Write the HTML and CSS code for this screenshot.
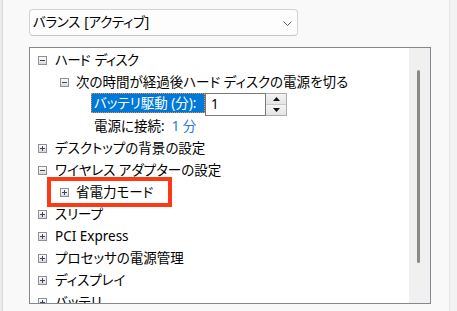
FILE: index.html
```html
<!DOCTYPE html>
<html lang="ja">
<head>
<meta charset="utf-8">
<link rel="stylesheet" href="styles.css">
</head>
<body>
<div class="page">
  <div class="edge-left"></div>
  <div class="main">
    <div class="combo">
      <span class="combo-text">バランス [アクティブ]</span>
      <svg class="chev" width="9" height="5" viewBox="0 0 9 5"><path d="M0.5 0.5 L4.5 4.5 L8.5 0.5" fill="none" stroke="#5a5a5a" stroke-width="1"/></svg>
    </div>
    <div class="tree">
      <div class="tree-list">
        <div class="row l0"><span class="exp"><svg width="7" height="7" viewBox="0 0 7 7"><path d="M1 3.5h5" stroke="#34466b"/></svg></span><span class="kana">ハード ディスク</span></div>
        <div class="row l1"><span class="exp"><svg width="7" height="7" viewBox="0 0 7 7"><path d="M1 3.5h5" stroke="#34466b"/></svg></span><span>次の時間が経過後ハード ディスクの電源を切る</span></div>
        <div class="row l2 edit-row">
          <span class="sel">バッテリ駆動 (分):</span>
          <span class="edit">1</span>
          <span class="spin">
            <span class="spin-btn"><svg width="7" height="4" viewBox="0 0 7 4"><path d="M0 4 L3.5 0 L7 4Z" fill="#111"/></svg></span>
            <span class="spin-btn"><svg width="7" height="4" viewBox="0 0 7 4"><path d="M0 0 L3.5 4 L7 0Z" fill="#111"/></svg></span>
          </span>
        </div>
        <div class="row l2t"><span>電源に接続:</span><span class="val">1 分</span></div>
        <div class="row l0"><span class="exp"><svg width="7" height="7" viewBox="0 0 7 7"><path d="M1 3.5h5M3.5 1v5" stroke="#34466b"/></svg></span><span>デスクトップの背景の設定</span></div>
        <div class="row l0"><span class="exp"><svg width="7" height="7" viewBox="0 0 7 7"><path d="M1 3.5h5" stroke="#34466b"/></svg></span><span>ワイヤレス アダプターの設定</span></div>
        <div class="row l1"><span class="exp"><svg width="7" height="7" viewBox="0 0 7 7"><path d="M1 3.5h5M3.5 1v5" stroke="#34466b"/></svg></span><span>省電力モード</span></div>
        <div class="row l0"><span class="exp"><svg width="7" height="7" viewBox="0 0 7 7"><path d="M1 3.5h5M3.5 1v5" stroke="#34466b"/></svg></span><span>スリープ</span></div>
        <div class="row l0"><span class="exp"><svg width="7" height="7" viewBox="0 0 7 7"><path d="M1 3.5h5M3.5 1v5" stroke="#34466b"/></svg></span><span>PCI Express</span></div>
        <div class="row l0"><span class="exp"><svg width="7" height="7" viewBox="0 0 7 7"><path d="M1 3.5h5M3.5 1v5" stroke="#34466b"/></svg></span><span>プロセッサの電源管理</span></div>
        <div class="row l0"><span class="exp"><svg width="7" height="7" viewBox="0 0 7 7"><path d="M1 3.5h5M3.5 1v5" stroke="#34466b"/></svg></span><span>ディスプレイ</span></div>
        <div class="row l0"><span class="exp"><svg width="7" height="7" viewBox="0 0 7 7"><path d="M1 3.5h5M3.5 1v5" stroke="#34466b"/></svg></span><span>バッテリ</span></div>
      </div>
      <div class="scrollbar"><div class="thumb"></div></div>
      <div class="mark"></div>
    </div>
  </div>
  <div class="edge-right"></div>
</div>
</body>
</html>
```
FILE: styles.css
```css
html, body {
  margin: 0;
  padding: 0;
}
body {
  width: 457px;
  height: 311px;
  overflow: hidden;
  background: #f9f9f9;
  font-family: "Noto Sans", "Noto Sans CJK JP", sans-serif;
  font-size: 13.5px;
  font-feature-settings: "palt";
  color: #000;
}
.page {
  display: flex;
  height: 311px;
}
.edge-left {
  width: 2px;
  background: #ebebeb;
  border-right: 1px solid #d9d9d9;
}
.edge-right {
  width: 7px;
  background: #f3f3f3;
  border-left: 1px solid #e6e6e6;
}
.main {
  flex: 1;
  padding: 9px 0 0 26px;
}
.combo {
  box-sizing: border-box;
  width: 269px;
  height: 27px;
  border: 1px solid #d3d3d3;
  border-bottom-color: #c4c4c4;
  border-radius: 4px;
  background: #fdfdfd;
  display: flex;
  align-items: center;
  justify-content: space-between;
  padding: 0 5px 0 3px;
}
.combo-text {
  line-height: 25px;
  letter-spacing: -0.3px;
  word-spacing: 1px;
}
.chev {
  margin-top: 1px;
}
.tree {
  position: relative;
  box-sizing: border-box;
  width: 402px;
  height: 257px;
  margin-top: 11px;
  border: 1px solid #828790;
  background: #fff;
  display: flex;
  overflow: hidden;
}
.tree-list {
  flex: 1;
  padding-top: 1px;
}
.row {
  height: 22px;
  display: flex;
  align-items: center;
  white-space: nowrap;
  line-height: 22px;
}
.kana {
  letter-spacing: -0.7px;
  word-spacing: 2px;
}
.l0 { padding-left: 8px; }
.l1 { padding-left: 30px; }
.l2 { padding-left: 61px; }
.l2t { padding-left: 64px; }
.exp {
  box-sizing: border-box;
  width: 9px;
  height: 9px;
  border: 1px solid #8f8f8f;
  background: linear-gradient(#fdfdfd, #d9d9d9);
  display: flex;
  flex: none;
}
.l0 .exp { margin-right: 8px; }
.l1 .exp { margin-right: 7px; }
.edit-row {
  align-items: flex-start;
}
.sel {
  box-sizing: border-box;
  width: 114px;
  height: 20px;
  line-height: 18px;
  background: #0078d7;
  color: #fff;
  border: 1px dotted #ff8828;
  padding: 0 1px 0 2px;
}
.edit {
  box-sizing: border-box;
  width: 61px;
  height: 23px;
  border: 1px solid #7a7a7a;
  padding-left: 5px;
  line-height: 20px;
  background: #fff;
}
.spin {
  box-sizing: border-box;
  width: 21px;
  height: 23px;
  border: 1px solid #adadad;
  border-left: none;
  display: flex;
  flex-direction: column;
}
.spin-btn {
  flex: 1;
  display: flex;
  align-items: center;
  justify-content: center;
  background: linear-gradient(#f4f4f4, #e4e4e4);
}
.spin-btn + .spin-btn {
  border-top: 1px solid #c8c8c8;
}
.val {
  color: #2b74d6;
  margin-left: 7px;
}
.scrollbar {
  width: 21px;
  background: #f0f0f0;
  padding-top: 22px;
  box-sizing: border-box;
}
.thumb {
  width: 3px;
  height: 193px;
  margin-left: 8px;
  border-radius: 2px;
  background: #8a8a8a;
}
.mark {
  position: absolute;
  left: 17px;
  top: 129px;
  width: 125px;
  height: 30px;
  box-sizing: border-box;
  border: 4px solid #fb3a16;
}
```
